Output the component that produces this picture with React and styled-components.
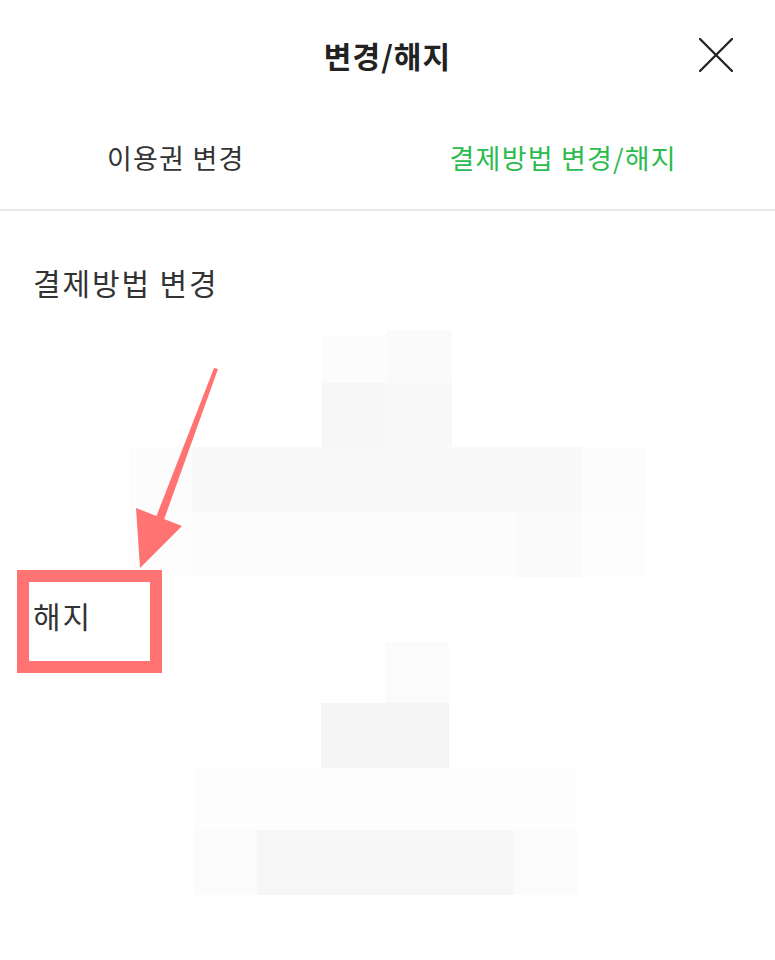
import React from "react";
import styled, { createGlobalStyle } from "styled-components";

const GlobalStyle = createGlobalStyle`
  * { box-sizing: border-box; }
  body {
    margin: 0;
    background: #fff;
    font-family: "Noto Sans CJK KR", "Noto Sans", sans-serif;
  }
`

const Page = styled.div`
  position: relative;
  width: 775px;
  height: 960px;
  overflow: hidden;
  background: #fff;
`

const Header = styled.header`
  height: 110px;
  display: flex;
  align-items: center;
  justify-content: center;
  position: relative;
`

const Title = styled.h1`
  margin: 0;
  font-size: 30px;
  font-weight: 700;
  color: #222;
  letter-spacing: 1.1px;
`

const CloseButton = styled.button`
  position: absolute;
  right: 42px;
  top: 38px;
  width: 34px;
  height: 34px;
  padding: 0;
  border: 0;
  background: none;
  display: flex;
`

const Tabs = styled.nav`
  display: flex;
  height: 101px;
  border-bottom: 2px solid #e8e8e8;
`

const Tab = styled.div`
  flex: 1;
  display: flex;
  align-items: center;
  justify-content: center;
  padding: 0 36px 4px 0;
  font-size: 27px;
  color: ${props => props.active ? "#2cbb4f" : "#333"};
  letter-spacing: 1.2px;
`

const Label = styled.div`
  padding-left: 33px;
  font-size: 30px;
  line-height: 40px;
  color: #333;
  margin-top: ${props => props.top}px;
  letter-spacing: 1.9px;
`

const MosaicSvg = styled.svg`
  display: block;
  margin-top: ${props => props.top}px;
`

const Overlay = styled.svg`
  position: absolute;
  left: 0;
  top: 0;
  pointer-events: none;
`

const MOSAIC_A = [
  [322, 335, 65, 48, "#fcfcfc"],
  [387, 330, 65, 53, "#fafafa"],
  [322, 383, 65, 64, "#f7f7f7"],
  [387, 383, 65, 64, "#f8f8f8"],
  [129, 447, 63, 65, "#fcfcfc"],
  [192, 447, 67, 65, "#f8f8f8"],
  [259, 447, 63, 65, "#f9f9f9"],
  [322, 447, 65, 65, "#f8f8f8"],
  [387, 447, 65, 65, "#f9f9f9"],
  [452, 447, 65, 65, "#f8f8f8"],
  [517, 447, 65, 65, "#f9f9f9"],
  [582, 447, 63, 65, "#fcfcfc"],
  [129, 512, 63, 65, "#fdfdfd"],
  [192, 512, 325, 65, "#fcfcfc"],
  [517, 512, 65, 65, "#fafafa"],
  [582, 512, 63, 65, "#fdfdfd"],
]

const MOSAIC_B = [
  [385, 642, 64, 61, "#fbfbfb"],
  [321, 703, 128, 65, "#f5f5f5"],
  [194, 768, 383, 62, "#fdfdfd"],
  [194, 830, 63, 65, "#fbfbfb"],
  [257, 830, 256, 65, "#f6f6f6"],
  [513, 830, 64, 65, "#fbfbfb"],
]

const Mosaic = ({ cells, y, height, top }) => (
  <MosaicSvg top={top} width="775" height={height} viewBox={`0 ${y} 775 ${height}`}>
    {cells.map(([cx, cy, w, h, fill], i) =>
      <rect key={i} x={cx} y={cy} width={w} height={h} fill={fill} />
    )}
  </MosaicSvg>
)

const App = () => {
  return (
    <Page>
      <GlobalStyle />
      <Header>
        <Title>변경/해지</Title>
        <CloseButton aria-label="닫기">
          <svg width="34" height="34" viewBox="0 0 34 34">
            <path d="M1 1 L33 33 M33 1 L1 33" stroke="#222" strokeWidth="2.3" strokeLinecap="round" />
          </svg>
        </CloseButton>
      </Header>
      <Tabs>
        <Tab>이용권 변경</Tab>
        <Tab active>결제방법 변경/해지</Tab>
      </Tabs>
      <Label top={51}>결제방법 변경</Label>
      <Mosaic cells={MOSAIC_A} y={328} height={249} top={26} />
      <Label top={18}>해지</Label>
      <Mosaic cells={MOSAIC_B} y={642} height={253} top={7} />

      <Overlay width="775" height="960" viewBox="0 0 775 960">
        <polygon points="214,368 218,369 161,528 153,525" fill="#ff7373" />
        <polygon points="136,508 182,526 140,568" fill="#ff7373" />
        <rect x="23" y="576" width="133" height="91" fill="none" stroke="#ff7373" strokeWidth="12" />
      </Overlay>
    </Page>
  )
}

export default App;
